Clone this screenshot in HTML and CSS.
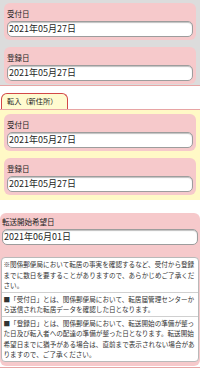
FILE: index.html
```html
<!DOCTYPE html>
<html>

<head>
  <meta charset="UTF-8">
  <meta name="viewport" content="width=device-width, initial-scale=1">
  <title>転居届 受付状況</title>
  <link rel="stylesheet" href="styles.css">
</head>

<body>
  <div class="section old">
    <div class="field">
      <div class="label">受付日</div>
      <div class="date">2021年05月27日</div>
    </div>
    <div class="field">
      <div class="label">登録日</div>
      <div class="date">2021年05月27日</div>
    </div>
  </div>

  <div class="tabs">
    <div class="tab">転入（新住所）</div>
  </div>
  <div class="section new">
    <div class="field">
      <div class="label">受付日</div>
      <div class="date">2021年05月27日</div>
    </div>
    <div class="field">
      <div class="label">登録日</div>
      <div class="date">2021年05月27日</div>
    </div>
  </div>

  <div class="field wide">
    <div class="label">転送開始希望日</div>
    <div class="date">2021年06月01日</div>
    <div class="notes">
      <div class="note">※関係郵便局において転居の事実を確認するなど、受付から登録までに数日を要することがありますので、あらかじめご了承ください。</div>
      <div class="note">■「受付日」とは、関係郵便局において、転居届管理センターから送信された転居データを確認した日となります。</div>
      <div class="note">■「登録日」とは、関係郵便局において、転送開始の準備が整った日及び転入者への配達の準備が整った日となります。転送開始希望日までに猶予がある場合は、直前まで表示されない場合がありますので、ご了承ください。</div>
    </div>
  </div>
  <div class="next"></div>
</body>

</html>
```

FILE: styles.css
```css
body {
  margin: 0;
  background-color: #fff;
  color: #2a2a2a;
  font-family: "Noto Sans CJK JP", "Noto Sans", sans-serif;
}

.section {
  display: flex;
  flex-direction: column;
  gap: 7px;
}

.old {
  background-color: #dcdcdc;
  padding: 3px 4px 1px;
  border-bottom: 1px solid #e7a5a5;
}

.new {
  background-color: #fff9c6;
  padding: 4px 4px 5px;
}

.field {
  background-color: #f6c9cb;
  border-radius: 6px;
  padding: 4px 3px 3px;
}

.label {
  height: 13px;
  font-size: 7.5px;
  line-height: 13px;
  color: #222;
}

.date {
  margin-top: 1px;
  height: 16px;
  box-sizing: border-box;
  padding-left: 1px;
  border: 1px solid #9d9d9d;
  border-radius: 5px;
  background-color: #fff;
  box-shadow: inset 0 1px 1px rgba(0, 0, 0, 0.25);
  font-size: 9px;
  line-height: 14px;
  color: #1e1e1e;
}

.tabs {
  display: flex;
  margin-top: 7px;
  padding-left: 1px;
  border-bottom: 1px solid #e7a5a5;
}

.tab {
  height: 16px;
  box-sizing: border-box;
  padding: 0 10px 0 5px;
  border: 1.5px solid #d24848;
  border-bottom: none;
  border-radius: 6px 6px 0 0;
  background-color: #fffbd0;
  font-size: 7.2px;
  line-height: 15px;
  color: #1e1e1e;
}

.wide {
  margin-top: 13px;
  padding: 2px 2px 4px;
}

.notes {
  margin: 12px -1px 0;
  border: 1px solid #b9b9b9;
  border-radius: 4px;
  background-color: #fff;
}

.note {
  padding: 1px 1.5px;
  font-size: 6.6px;
  line-height: 10.5px;
  color: #333;
}

.note + .note {
  border-top: 1px solid #d0d0d0;
}

.next {
  margin-top: 1px;
  border-top: 1px solid #e7a5a5;
}
```
